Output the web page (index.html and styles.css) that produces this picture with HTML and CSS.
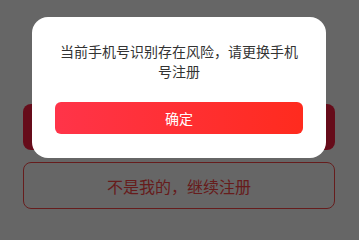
FILE: index.html
```html
<!DOCTYPE html>
<html lang="zh-CN">
<head>
<meta charset="utf-8">
<link rel="stylesheet" href="styles.css">
</head>
<body>
<div class="page">
  <div class="btn-primary"></div>
  <div class="btn-outline">不是我的，继续注册</div>
</div>
<div class="mask">
  <div class="dialog">
    <p class="dialog-text">当前手机号识别存在风险，请更换手机号注册</p>
    <div class="dialog-btn">确定</div>
  </div>
</div>
</body>
</html>
```
FILE: styles.css
```css
* { box-sizing: border-box; }
html, body {
  margin: 0;
  width: 359px;
  height: 225px;
  overflow: hidden;
  background: #fff;
  font-family: "Noto Sans CJK SC", "Noto Sans", sans-serif;
}
.page {
  display: flex;
  flex-direction: column;
  gap: 12px;
  padding: 104px 24px 0 23px;
}
.btn-primary {
  height: 46px;
  border-radius: 8px;
  background: #ff1f42;
}
.btn-outline {
  height: 47px;
  border: 1px solid #ff4a4a;
  border-radius: 8px;
  color: #ff4848;
  font-size: 16px;
  display: flex;
  align-items: center;
  justify-content: center;
}
.mask {
  position: fixed;
  inset: 0;
  background: rgba(0, 0, 0, 0.6);
}
.dialog {
  position: absolute;
  left: 32px;
  top: 17px;
  width: 294px;
  padding: 24px 23px;
  background: #fff;
  border-radius: 16px;
}
.dialog-text {
  margin: 0 0 21px;
  font-size: 14px;
  line-height: 20px;
  color: #333;
  text-align: center;
}
.dialog-btn {
  height: 32px;
  border-radius: 6px;
  background: linear-gradient(90deg, #ff3449, #ff2b1e);
  color: #fff;
  font-size: 14px;
  display: flex;
  align-items: center;
  justify-content: center;
}
```
